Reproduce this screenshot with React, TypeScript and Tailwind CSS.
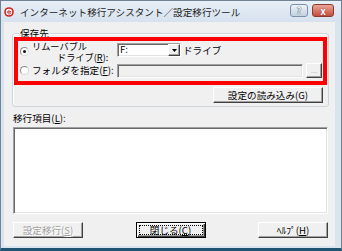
import React from "react"

const raised =
  "border border-t-white border-l-white border-b-[#404040] border-r-[#404040] shadow-[inset_-1px_-1px_0_#a0a0a0] bg-[#f0f0f0]"
const sunken =
  "border border-t-[#a0a0a0] border-l-[#a0a0a0] border-b-white border-r-white shadow-[inset_1px_1px_0_#696969,inset_-1px_-1px_0_#e3e3e3]"

function Radio({ checked }: { checked?: boolean }) {
  return (
    <span className="flex h-[9px] w-[9px] shrink-0 items-center justify-center rounded-full border border-t-[#8a8a8a] border-l-[#8a8a8a] border-b-[#d8d8d8] border-r-[#d8d8d8] bg-white">
      {checked && <span className="h-[3px] w-[3px] rounded-full bg-[#111]" />}
    </span>
  )
}

function AppIcon() {
  return (
    <svg width="10" height="10" viewBox="0 0 10 10">
      <circle cx="5" cy="5" r="4.8" fill="#d51f1f" />
      <circle cx="5" cy="5" r="3.2" fill="#fff" />
      <path d="M3.2 5.4 C3.2 3.6 6.6 3.4 6.8 5 L3.4 5.2 M3.6 6.2 C4.4 7.4 6 7.2 6.8 6.2" stroke="#d51f1f" strokeWidth="1" fill="none" />
    </svg>
  )
}

export default function App() {
  return (
    <div className="flex h-[251px] w-[342px] flex-col border border-[#6f8296] border-b-[3px] border-b-[#1f5572] bg-[#d9e4ef] font-['Noto_Sans_CJK_JP','Noto_Sans',sans-serif] text-[9.6px] leading-[12px] text-black">
      {/* title bar */}
      <div className="flex h-[21px] shrink-0 items-center bg-gradient-to-b from-[#e8eff6] to-[#d6e2ee] pl-[3px] pr-[7px]">
        <AppIcon />
        <span className="ml-[6px] flex-1 text-[9.6px] text-[#1a1a1a]">
          インターネット移行アシスタント／設定移行ツール
        </span>
        <div className="flex gap-[4px] self-start pt-[3px]">
          <div className="flex h-[13px] w-[18px] items-center justify-center rounded-[3px] border border-[#7d8fa6] bg-gradient-to-b from-[#eef3f8] to-[#c3d1e0] text-[9px] font-bold leading-none text-[#f4f7fb] [text-shadow:0_0_1px_#3a4d63,0_0_1px_#3a4d63]">
            ?
          </div>
          <div className="flex h-[13px] w-[22px] items-center justify-center rounded-[3px] border border-[#8b3a32] bg-gradient-to-b from-[#e9a699] to-[#c44b3d] text-[10px] font-bold leading-none text-white [text-shadow:0_0_1px_#5a1a14]">
            x
          </div>
        </div>
      </div>

      {/* client area */}
      <div className="ml-[3px] mr-[6px] mb-[2px] flex flex-1 flex-col bg-[#f0f0f0] pl-[8px] pr-[6px]">
        {/* group box */}
        <div className="mt-[11px] flex flex-col rounded-[3px] border border-[#d0d5da] pb-[3px] shadow-[inset_1px_1px_0_#fff]">
          <div className="-mt-[7px] ml-[6px] h-[12px] w-fit bg-[#f0f0f0] px-[1px]">保存先</div>
          <div className="-mt-[2px] mx-[1px] flex flex-col border-4 border-[#ff0000] pt-[1px] pb-[2px]">
            <div className="flex h-[21px]">
              <div className="flex w-[99px]">
                <div className="ml-[2px] mt-[5px]">
                  <Radio checked />
                </div>
                <div className="-mt-[1px] ml-[3px] flex flex-col text-[9.2px] leading-[11px]">
                  <span>リムーバブル</span>
                  <span className="pl-[25px]">
                    ドライブ(<span className="underline">R</span>):
                  </span>
                </div>
              </div>
              <div className={`mt-[1px] flex h-[14px] w-[64px] bg-white ${sunken}`}>
                <span className="flex-1 pl-[2px] leading-[11px]">F:</span>
                <span className={`flex w-[12px] items-center justify-center ${raised}`}>
                  <svg width="5" height="3" viewBox="0 0 5 3">
                    <path d="M0 0 H5 L2.5 3 Z" fill="#000" />
                  </svg>
                </span>
              </div>
              <span className="ml-[2px] mt-[2px]">ドライブ</span>
            </div>
            <div className="flex h-[16px]">
              <div className="flex w-[99px]">
                <div className="ml-[2px] mt-[3px]">
                  <Radio />
                </div>
                <span className="ml-[3px] mt-[1px]">
                  フォルダを指定(<span className="underline">F</span>):
                </span>
              </div>
              <div className={`mt-[1px] h-[14px] w-[186px] bg-[#f0f0f0] ${sunken}`} />
              <div className={`ml-[3px] flex h-[15px] w-[16px] items-end justify-center pb-[3px] font-['Liberation_Sans',sans-serif] text-[8px] leading-[6px] text-[#a0a0a0] ${raised}`}>
                ...
              </div>
            </div>
          </div>
          <div className={`mr-[5px] mt-[2px] flex h-[16px] w-[110px] items-center justify-center self-end ${raised}`}>
            設定の読み込み(G)
          </div>
        </div>

        <div className="ml-[1px] mt-[5px] h-[12px]">
          移行項目(<span className="underline">L</span>):
        </div>
        <div className={`mx-[1px] mt-[3px] h-[87px] bg-white ${sunken}`} />

        <div className="mx-[1px] mt-[8px] flex justify-between">
          <div className={`flex h-[16px] w-[70px] items-center justify-center text-[#a0a0a0] [text-shadow:1px_1px_0_#fff] ${raised}`}>
            設定移行(<span className="underline">S</span>)
          </div>
          <div className="flex h-[16px] w-[70px] items-center justify-center border border-black bg-[#f0f0f0] p-[2px] shadow-[inset_1px_1px_0_#fff,inset_-1px_-1px_0_#404040,inset_-2px_-2px_0_#a0a0a0]">
            <span className="flex h-full w-full items-center justify-center border border-dotted border-black">
              閉じる(<span className="underline">C</span>)
            </span>
          </div>
          <div className={`flex h-[16px] w-[70px] items-center justify-center ${raised}`}>
            ﾍﾙﾌﾟ(<span className="underline">H</span>)
          </div>
        </div>
      </div>
    </div>
  )
}
